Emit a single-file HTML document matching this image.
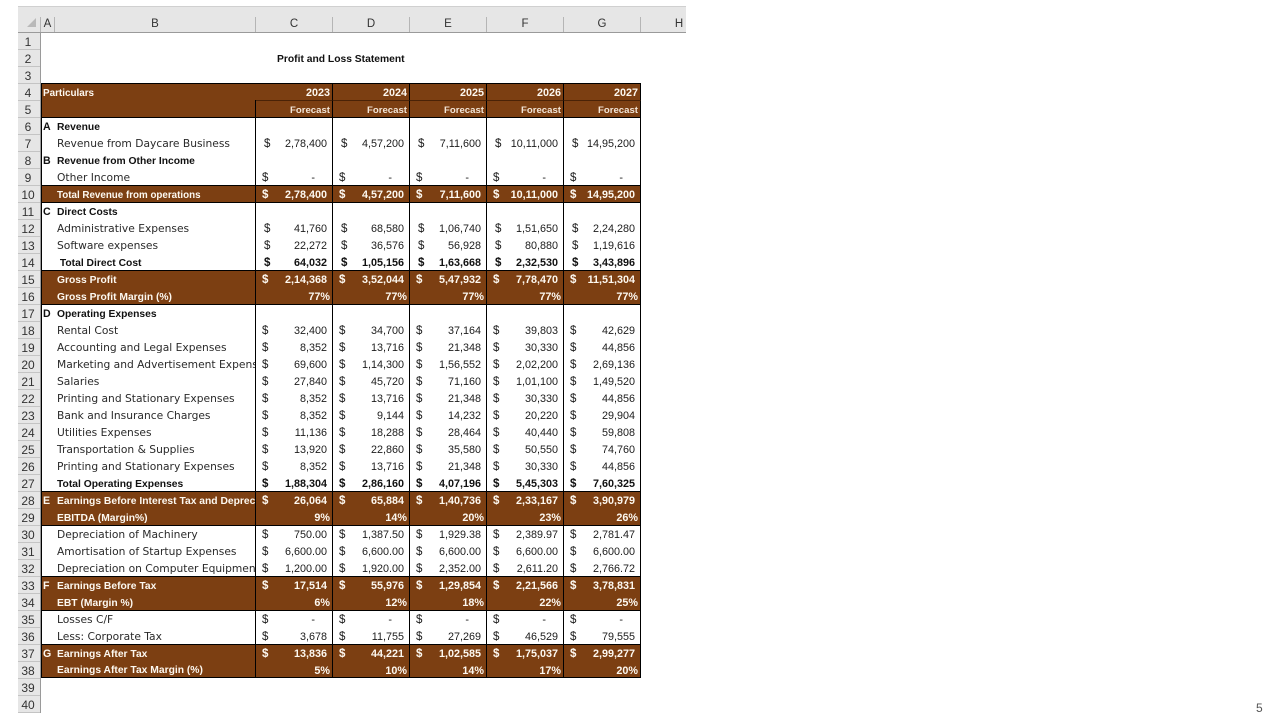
<!DOCTYPE html>
<html><head><meta charset="utf-8"><style>
html,body{margin:0;padding:0;background:#fff;width:1280px;height:720px;overflow:hidden}
body{position:relative;font-family:"Liberation Sans",sans-serif;color:#111;filter:blur(.3px)}
#hd{position:absolute;left:18px;top:6px;width:668px;height:27px;background:#e6e6e6;border-top:1px solid #d0d0d0;border-bottom:1px solid #9a9a9a;box-sizing:border-box}
#hd span{position:absolute;top:10px;height:15px;line-height:15px;font-size:11.5px;color:#333;text-align:center;border-right:1px solid #b5b5b5;box-sizing:border-box}
#tri{position:absolute;left:27px;top:18px;width:0;height:0;border-left:9px solid transparent;border-bottom:9px solid #b9b9b9}
#rh{position:absolute;left:18px;top:33px;width:23px;background:#e6e6e6;border-right:1px solid #9a9a9a;box-sizing:border-box}
#rh div{height:17px;line-height:18px;font-size:12px;color:#333;text-align:center;border-bottom:1px solid #c4c4c4;box-sizing:border-box;padding-right:2px}
#title{position:absolute;left:277px;top:51px;font-size:10.3px;font-weight:bold;line-height:17px;color:#111}
#pg{position:absolute;left:1256px;top:701px;font-size:12px;color:#555}
table{position:absolute;left:41px;top:83px;border-collapse:separate;border-spacing:0;table-layout:fixed;width:600px}
tr{height:17px}
td{height:17px;padding:0;box-sizing:border-box;overflow:hidden;white-space:nowrap;font-size:10.8px;line-height:13px;vertical-align:bottom;text-align:right;padding-right:5px;border-right:1px solid #000;color:#1c1c1c}
td i{float:left;font-style:normal;margin-left:6px;font-size:11.5px}
td u{text-decoration:none;padding-right:12px}
td.a{text-align:left;padding:0 0 0 1px;border-right:0;border-left:1px solid #000;font-weight:bold;font-size:10.6px}
td.l{text-align:left;padding:0 0 0 1px;font-family:"DejaVu Sans",sans-serif;font-size:10.7px;line-height:14px;color:#2a2a2a}
tr.b td{font-weight:bold;color:#111}
tr.b td.l,tr.h td.l{font-family:"Liberation Sans",sans-serif;font-size:10.3px;line-height:13px}
tr.h td{background:#7c3f12;color:#fdf8f0;font-weight:bold}
tr.t td{border-top:1px solid #000}
tr.w td i{margin-left:8px}
tr.p td{padding-right:2px}
tr.p td.a{padding:0 0 0 1px}
tr.p td.l{padding:0 0 0 1px}
tr.e td{border-bottom:1px solid #000;line-height:12px}
tr.e td.l{line-height:12px}
tr.f td.c{border-top:1px solid #4a2206;font-size:9.6px;color:#f3e6d8}
col.x{width:77px}
</style></head><body>
<div id="hd">
<span style="left:0;width:23px"></span>
<span style="left:23px;width:14px">A</span>
<span style="left:37px;width:201px">B</span>
<span style="left:238px;width:77px">C</span>
<span style="left:315px;width:77px">D</span>
<span style="left:392px;width:77px">E</span>
<span style="left:469px;width:77px">F</span>
<span style="left:546px;width:77px">G</span>
<span style="left:623px;width:45px;border-right:0;padding-left:31px">H</span>
</div>
<div id="tri"></div>
<div id="rh">
<div>1</div><div>2</div><div>3</div><div>4</div><div>5</div><div>6</div><div>7</div><div>8</div><div>9</div><div>10</div>
<div>11</div><div>12</div><div>13</div><div>14</div><div>15</div><div>16</div><div>17</div><div>18</div><div>19</div><div>20</div>
<div>21</div><div>22</div><div>23</div><div>24</div><div>25</div><div>26</div><div>27</div><div>28</div><div>29</div><div>30</div>
<div>31</div><div>32</div><div>33</div><div>34</div><div>35</div><div>36</div><div>37</div><div>38</div><div>39</div><div>40</div>
</div>
<div id="title">Profit and Loss Statement</div>
<div id="pg">5</div>
<table>
<colgroup><col style="width:15px"><col style="width:200px"><col class="x"><col class="x"><col class="x"><col class="x"><col class="x"></colgroup>
<tr class="h t p"><td class="a" colspan="2" style="font-size:9.9px">Particulars</td><td>2023</td><td>2024</td><td>2025</td><td>2026</td><td>2027</td></tr>
<tr class="h p f"><td class="a"></td><td class="l"></td><td class="c">Forecast</td><td class="c">Forecast</td><td class="c">Forecast</td><td class="c">Forecast</td><td class="c">Forecast</td></tr>
<tr class="b t"><td class="a">A</td><td class="l">Revenue</td><td></td><td></td><td></td><td></td><td></td></tr>
<tr class="w"><td class="a"></td><td class="l">Revenue from Daycare Business</td><td><i>$</i>2,78,400</td><td><i>$</i>4,57,200</td><td><i>$</i>7,11,600</td><td><i>$</i>10,11,000</td><td><i>$</i>14,95,200</td></tr>
<tr class="b"><td class="a">B</td><td class="l">Revenue from Other Income</td><td></td><td></td><td></td><td></td><td></td></tr>
<tr><td class="a"></td><td class="l">Other Income</td><td><i>$</i><u>-</u></td><td><i>$</i><u>-</u></td><td><i>$</i><u>-</u></td><td><i>$</i><u>-</u></td><td><i>$</i><u>-</u></td></tr>
<tr class="h t"><td class="a"></td><td class="l" style="font-size:9.8px">Total Revenue from operations</td><td><i>$</i>2,78,400</td><td><i>$</i>4,57,200</td><td><i>$</i>7,11,600</td><td><i>$</i>10,11,000</td><td><i>$</i>14,95,200</td></tr>
<tr class="b t"><td class="a">C</td><td class="l">Direct Costs</td><td></td><td></td><td></td><td></td><td></td></tr>
<tr class="w"><td class="a"></td><td class="l">Administrative Expenses</td><td><i>$</i>41,760</td><td><i>$</i>68,580</td><td><i>$</i>1,06,740</td><td><i>$</i>1,51,650</td><td><i>$</i>2,24,280</td></tr>
<tr class="w"><td class="a"></td><td class="l">Software expenses</td><td><i>$</i>22,272</td><td><i>$</i>36,576</td><td><i>$</i>56,928</td><td><i>$</i>80,880</td><td><i>$</i>1,19,616</td></tr>
<tr class="b w"><td class="a"></td><td class="l">&nbsp;Total Direct Cost</td><td><i>$</i>64,032</td><td><i>$</i>1,05,156</td><td><i>$</i>1,63,668</td><td><i>$</i>2,32,530</td><td><i>$</i>3,43,896</td></tr>
<tr class="h t"><td class="a"></td><td class="l">Gross Profit</td><td><i>$</i>2,14,368</td><td><i>$</i>3,52,044</td><td><i>$</i>5,47,932</td><td><i>$</i>7,78,470</td><td><i>$</i>11,51,304</td></tr>
<tr class="h p"><td class="a"></td><td class="l">Gross Profit Margin (%)</td><td>77%</td><td>77%</td><td>77%</td><td>77%</td><td>77%</td></tr>
<tr class="b t"><td class="a">D</td><td class="l">Operating Expenses</td><td></td><td></td><td></td><td></td><td></td></tr>
<tr><td class="a"></td><td class="l">Rental Cost</td><td><i>$</i>32,400</td><td><i>$</i>34,700</td><td><i>$</i>37,164</td><td><i>$</i>39,803</td><td><i>$</i>42,629</td></tr>
<tr><td class="a"></td><td class="l">Accounting and Legal Expenses</td><td><i>$</i>8,352</td><td><i>$</i>13,716</td><td><i>$</i>21,348</td><td><i>$</i>30,330</td><td><i>$</i>44,856</td></tr>
<tr><td class="a"></td><td class="l">Marketing and Advertisement Expenses</td><td><i>$</i>69,600</td><td><i>$</i>1,14,300</td><td><i>$</i>1,56,552</td><td><i>$</i>2,02,200</td><td><i>$</i>2,69,136</td></tr>
<tr><td class="a"></td><td class="l">Salaries</td><td><i>$</i>27,840</td><td><i>$</i>45,720</td><td><i>$</i>71,160</td><td><i>$</i>1,01,100</td><td><i>$</i>1,49,520</td></tr>
<tr><td class="a"></td><td class="l">Printing and Stationary Expenses</td><td><i>$</i>8,352</td><td><i>$</i>13,716</td><td><i>$</i>21,348</td><td><i>$</i>30,330</td><td><i>$</i>44,856</td></tr>
<tr><td class="a"></td><td class="l">Bank and Insurance Charges</td><td><i>$</i>8,352</td><td><i>$</i>9,144</td><td><i>$</i>14,232</td><td><i>$</i>20,220</td><td><i>$</i>29,904</td></tr>
<tr><td class="a"></td><td class="l">Utilities Expenses</td><td><i>$</i>11,136</td><td><i>$</i>18,288</td><td><i>$</i>28,464</td><td><i>$</i>40,440</td><td><i>$</i>59,808</td></tr>
<tr><td class="a"></td><td class="l">Transportation &amp; Supplies</td><td><i>$</i>13,920</td><td><i>$</i>22,860</td><td><i>$</i>35,580</td><td><i>$</i>50,550</td><td><i>$</i>74,760</td></tr>
<tr><td class="a"></td><td class="l">Printing and Stationary Expenses</td><td><i>$</i>8,352</td><td><i>$</i>13,716</td><td><i>$</i>21,348</td><td><i>$</i>30,330</td><td><i>$</i>44,856</td></tr>
<tr class="b"><td class="a"></td><td class="l">Total Operating Expenses</td><td><i>$</i>1,88,304</td><td><i>$</i>2,86,160</td><td><i>$</i>4,07,196</td><td><i>$</i>5,45,303</td><td><i>$</i>7,60,325</td></tr>
<tr class="h t"><td class="a">E</td><td class="l">Earnings Before Interest Tax and Depreciation</td><td><i>$</i>26,064</td><td><i>$</i>65,884</td><td><i>$</i>1,40,736</td><td><i>$</i>2,33,167</td><td><i>$</i>3,90,979</td></tr>
<tr class="h p"><td class="a"></td><td class="l">EBITDA (Margin%)</td><td>9%</td><td>14%</td><td>20%</td><td>23%</td><td>26%</td></tr>
<tr class="t"><td class="a"></td><td class="l">Depreciation of Machinery</td><td><i>$</i>750.00</td><td><i>$</i>1,387.50</td><td><i>$</i>1,929.38</td><td><i>$</i>2,389.97</td><td><i>$</i>2,781.47</td></tr>
<tr><td class="a"></td><td class="l">Amortisation of Startup Expenses</td><td><i>$</i>6,600.00</td><td><i>$</i>6,600.00</td><td><i>$</i>6,600.00</td><td><i>$</i>6,600.00</td><td><i>$</i>6,600.00</td></tr>
<tr><td class="a"></td><td class="l">Depreciation on Computer Equipment</td><td><i>$</i>1,200.00</td><td><i>$</i>1,920.00</td><td><i>$</i>2,352.00</td><td><i>$</i>2,611.20</td><td><i>$</i>2,766.72</td></tr>
<tr class="h t"><td class="a">F</td><td class="l">Earnings Before Tax</td><td><i>$</i>17,514</td><td><i>$</i>55,976</td><td><i>$</i>1,29,854</td><td><i>$</i>2,21,566</td><td><i>$</i>3,78,831</td></tr>
<tr class="h p"><td class="a"></td><td class="l">EBT (Margin %)</td><td>6%</td><td>12%</td><td>18%</td><td>22%</td><td>25%</td></tr>
<tr class="t"><td class="a"></td><td class="l">Losses C/F</td><td><i>$</i><u>-</u></td><td><i>$</i><u>-</u></td><td><i>$</i><u>-</u></td><td><i>$</i><u>-</u></td><td><i>$</i><u>-</u></td></tr>
<tr><td class="a"></td><td class="l">Less: Corporate Tax</td><td><i>$</i>3,678</td><td><i>$</i>11,755</td><td><i>$</i>27,269</td><td><i>$</i>46,529</td><td><i>$</i>79,555</td></tr>
<tr class="h t"><td class="a">G</td><td class="l">Earnings After Tax</td><td><i>$</i>13,836</td><td><i>$</i>44,221</td><td><i>$</i>1,02,585</td><td><i>$</i>1,75,037</td><td><i>$</i>2,99,277</td></tr>
<tr class="h p e"><td class="a"></td><td class="l">Earnings After Tax Margin (%)</td><td>5%</td><td>10%</td><td>14%</td><td>17%</td><td>20%</td></tr>
</table>
</body></html>
